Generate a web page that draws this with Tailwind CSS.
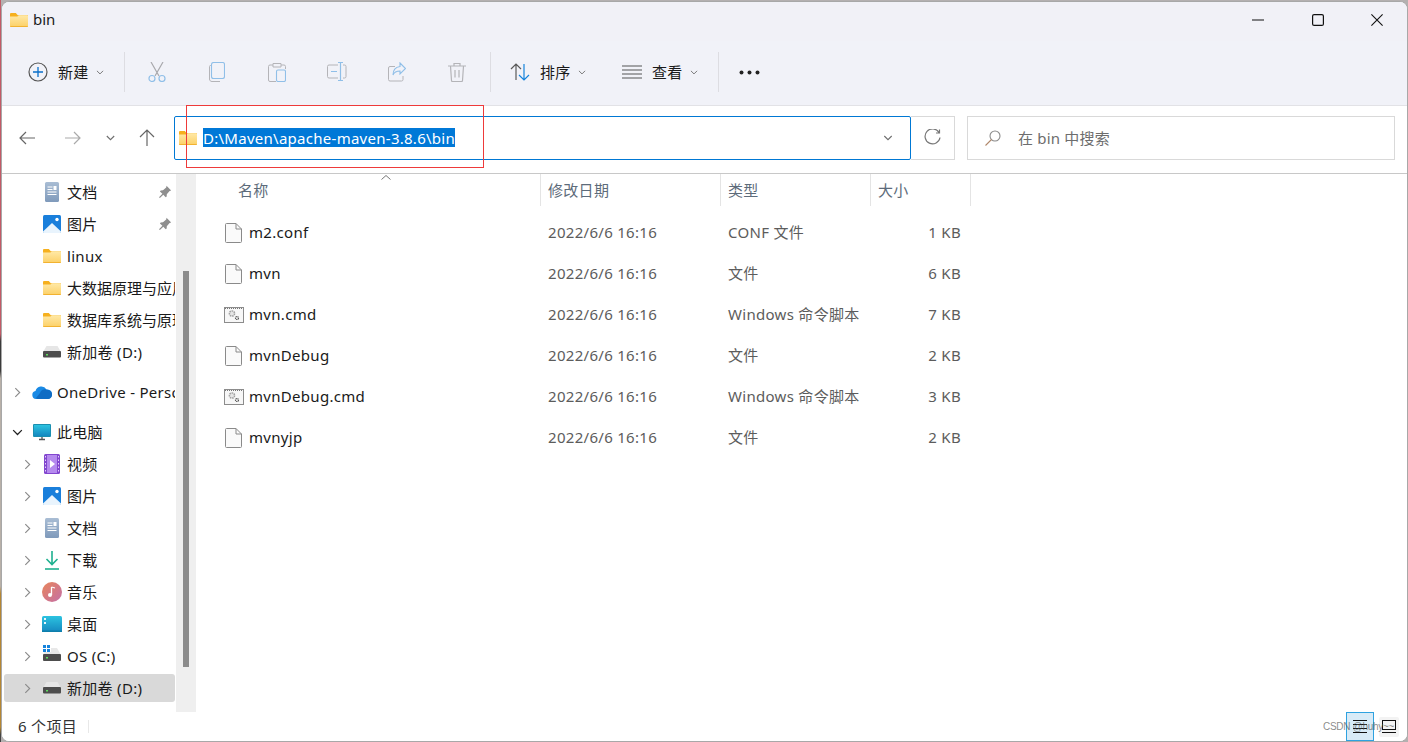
<!DOCTYPE html>
<html lang="zh-CN">
<head>
<meta charset="utf-8">
<title>bin</title>
<script src="https://cdn.jsdelivr.net/npm/@tailwindcss/browser@4"></script>
</head>
<body class="m-0 overflow-hidden bg-[#b4b0b0]">
<svg width="0" height="0" class="absolute">
  <defs>
    <linearGradient id="fg" x1="0" y1="0" x2="0" y2="1"><stop offset="0" stop-color="#ffe9a8"/><stop offset="1" stop-color="#fcd066"/></linearGradient>
    <linearGradient id="mus" x1="0" y1="0" x2="1" y2="1"><stop offset="0" stop-color="#e8855a"/><stop offset="1" stop-color="#c46fa8"/></linearGradient>
    <linearGradient id="desk" x1="0" y1="0" x2="0" y2="1"><stop offset="0" stop-color="#2cc3e0"/><stop offset="1" stop-color="#1588c0"/></linearGradient>
    <linearGradient id="docg" x1="0" y1="0" x2="0" y2="1"><stop offset="0" stop-color="#a9bdd4"/><stop offset="1" stop-color="#7f9abb"/></linearGradient>
    <symbol id="folder" viewBox="0 0 18 14"><path d="M0 1.200C0 .5.5 0 1.200 0h4.600l2 2.200H18V5H0z" fill="#f6b01e"/><path d="M0 3.400h7.400l1.600-1.200h8c.6 0 1 .4 1 1V13c0 .6-.4 1-1 1H1c-.6 0-1-.4-1-1z" fill="url(#fg)"/><path d="M0 13.200h18V13c0 .6-.4 1-1 1H1c-.6 0-1-.4-1-.8z" fill="#eea81e"/></symbol>
    <symbol id="file" viewBox="0 0 17 20"><path d="M.5 1.500a1 1 0 0 1 1-1H11L16.500 6v12.500a1 1 0 0 1-1 1h-14a1 1 0 0 1-1-1z" fill="#fafafa" stroke="#8a8a8a"/><path d="M11 .5V6h5.500" fill="none" stroke="#8a8a8a"/></symbol>
    <symbol id="cmd" viewBox="0 0 20 16"><rect x=".5" y=".5" width="19" height="15" fill="#f7f7f7" stroke="#8c8c8c"/><path d="M1 1.500h18" stroke="#777" stroke-dasharray="1 1"/><circle cx="8" cy="6.500" r="2.600" fill="#e6e6e6" stroke="#a0a0a0" stroke-width="1.500" stroke-dasharray="1.600 .7"/><circle cx="13" cy="11" r="1.500" fill="#fff" stroke="#555" stroke-width="1.200" stroke-dasharray="1.200 .5"/></symbol>
    <symbol id="chev-r" viewBox="0 0 8 12"><path d="M1.500 1l5 5-5 5" fill="none" stroke="#8a8a8a" stroke-width="1.300"/></symbol>
    <symbol id="chev-d" viewBox="0 0 9 6"><path d="M.8 1l3.700 3.700L8.200 1" fill="none" stroke="#6e6e6e" stroke-width="1.100"/></symbol>
    <symbol id="doc" viewBox="0 0 16 20"><rect width="14" height="20" x="1" rx="1.500" fill="url(#docg)"/><path d="M3.500 5h5M3.500 7.500h5M3.500 10h9M3.500 12.500h9" stroke="#fff" stroke-width="1"/><rect x="9.500" y="4" width="3" height="4" fill="#fff"/></symbol>
    <symbol id="pic" viewBox="0 0 18 18"><rect width="18" height="18" rx="1.500" fill="#1a7fdb"/><path d="M0 16.500L9 8l9 8.500V17a1 1 0 0 1-1 1H1a1 1 0 0 1-1-1z" fill="#e9f4fd"/><circle cx="14" cy="4.500" r="1.700" fill="#fff"/></symbol>
    <symbol id="pin" viewBox="0 0 14 14"><path d="M8.500 0.800l4.700 4.700-1.600.4-2.800 3.300-.1 2.300-1 .8-2.400-2.600-3.400 3.400-.9-.9 3.400-3.400-2.500-2.400.8-1 2.300-.1 3.200-2.800z" fill="#8f8f8f"/></symbol>
    <symbol id="drive" viewBox="0 0 18 12"><path d="M3.500 0h11L18 6H0z" fill="#e6e6e6"/><rect y="5" width="18" height="6.500" rx="1" fill="#4d4d4d"/><rect x="3" y="8" width="2" height="1.500" fill="#5fdc5f"/></symbol>
  </defs>
</svg>

<div class="w-[1408px] h-[742px] relative overflow-hidden bg-[#b4b0b0]" style="font-family:'Noto Sans','Noto Sans CJK SC',sans-serif">
  <div class="w-[1407px] h-[741px] mt-px ml-px flex flex-col bg-white rounded-[8px] border border-[#a8a8a8] overflow-hidden text-[15px] tracking-[0.3px] text-[#1a1a1a]">

    <!-- Title bar -->
    <div class="h-[39px] shrink-0 flex items-center bg-[#f1f1f7] pb-[4px]">
      <svg class="w-[18px] h-[14px] ml-[8px]"><use href="#folder"/></svg>
      <span class="ml-[5px] tracking-normal">bin</span>
      <div class="ml-auto flex items-center pr-[24px] gap-[47px]">
        <svg class="w-[12px] h-[12px] mr-px" viewBox="0 0 12 12"><path d="M0 6h12" stroke="#111" stroke-width="1.200"/></svg>
        <svg class="w-[12px] h-[12px]" viewBox="0 0 12 12"><rect x=".6" y=".6" width="10.800" height="10.800" rx="1.500" fill="none" stroke="#111" stroke-width="1.200"/></svg>
        <svg class="w-[12px] h-[12px]" viewBox="0 0 12 12"><path d="M.4.400l11.200 11.200M11.600.400L.4 11.600" stroke="#111" stroke-width="1.100"/></svg>
      </div>
    </div>

    <!-- Toolbar -->
    <div class="h-[65px] shrink-0 flex items-center bg-[#f1f2f8] border-b border-[#e2e2e6] pl-[26px] pb-[2px]">
      <svg class="w-[20px] h-[20px]" viewBox="0 0 20 20"><circle cx="10" cy="10" r="9" fill="none" stroke="#555" stroke-width="1.200"/><path d="M10 5v10M5 10h10" stroke="#0a6fc9" stroke-width="1.300"/></svg>
      <span class="ml-[10px] w-[30px] whitespace-nowrap">新建</span>
      <svg class="ml-[8px] w-[8px] h-[5px]"><use href="#chev-d"/></svg>
      <div class="ml-[20px] w-px h-[40px] bg-[#dddde2]"></div>
      <div class="flex items-center">
        <svg class="ml-[23px] w-[18px] h-[20px]" viewBox="0 0 18 20"><path d="M3 0l8 14M15 0L7 14" stroke="#a9a9ad" stroke-width="1.200"/><circle cx="4" cy="16.500" r="3" fill="none" stroke="#90bfe8" stroke-width="1.200"/><circle cx="14" cy="16.500" r="3" fill="none" stroke="#90bfe8" stroke-width="1.200"/></svg>
        <svg class="ml-[43px] w-[16px] h-[20px]" viewBox="0 0 16 20"><path d="M2.500 3.500h-1a1 1 0 0 0-1 1V17c0 1.500 1 2.500 2.500 2.500h8" fill="none" stroke="#b4b4b8"/><rect x="2.500" y=".5" width="13" height="16" rx="2" fill="none" stroke="#90bfe8" stroke-width="1.100"/></svg>
        <svg class="ml-[43px] w-[18px] h-[20px]" viewBox="0 0 18 20"><path d="M5 3H2a1.500 1.500 0 0 0-1.500 1.500V18A1.500 1.500 0 0 0 2 19.500h6M13 3h3a1.500 1.500 0 0 1 1.500 1.500V7M5 1.500h8V5H5z" fill="none" stroke="#b4b4b8"/><rect x="8.500" y="8" width="9" height="11.500" rx="1.500" fill="#f1f2f8" stroke="#90bfe8" stroke-width="1.100"/></svg>
        <svg class="ml-[41px] w-[20px] h-[20px]" viewBox="0 0 20 20"><path d="M11 3H2a1.500 1.500 0 0 0-1.500 1.500v10A1.500 1.500 0 0 0 2 16h9M16 3h1.500A1.500 1.500 0 0 1 19 4.500v10a1.500 1.500 0 0 1-1.500 1.500H16" fill="none" stroke="#b4b4b8"/><path d="M11 .5h5M13.500.5v18M11 18.500h5M4 9.500h6" fill="none" stroke="#90bfe8" stroke-width="1.200"/></svg>
        <svg class="ml-[41px] w-[18px] h-[20px]" viewBox="0 0 18 20"><path d="M7 4.500H2A1.500 1.500 0 0 0 .5 6v11.500A1.500 1.500 0 0 0 2 19h11.500a1.500 1.500 0 0 0 1.500-1.500V14" fill="none" stroke="#b4b4b8"/><path d="M12 1l5.500 5.500L12 12V9c-4 0-6 1.500-7 4 0-5 3-8 7-8.500z" fill="none" stroke="#90bfe8" stroke-width="1.100"/></svg>
        <svg class="ml-[42px] w-[18px] h-[20px]" viewBox="0 0 18 20"><path d="M0 4h18M6 4V1.500h6V4M2.500 4l1 14.500a1 1 0 0 0 1 1h9a1 1 0 0 0 1-1l1-14.500M7 8v7.500M11 8v7.500" fill="none" stroke="#b4b4b8" stroke-width="1.200"/></svg>
      </div>
      <div class="ml-[24px] w-px h-[40px] bg-[#dddde2]"></div>
      <svg class="ml-[19px] w-[20px] h-[18px]" viewBox="0 0 20 18"><path d="M6 17V1M1 6l5-5 5 5" fill="none" stroke="#5a5a5a" stroke-width="1.200"/><path d="M14 1v16M9 12l5 5 5-5" fill="none" stroke="#1583dc" stroke-width="1.200"/></svg>
      <span class="ml-[10px] w-[30px] whitespace-nowrap">排序</span>
      <svg class="ml-[8px] w-[8px] h-[5px]"><use href="#chev-d"/></svg>
      <svg class="ml-[36px] w-[20px] h-[14px]" viewBox="0 0 20 14"><path d="M0 1h20M0 5h20M0 9h20M0 13h20" stroke="#555" stroke-width="1.100"/></svg>
      <span class="ml-[10px] w-[30px] whitespace-nowrap">查看</span>
      <svg class="ml-[8px] w-[8px] h-[5px]"><use href="#chev-d"/></svg>
      <div class="ml-[20px] w-px h-[40px] bg-[#dddde2]"></div>
      <svg class="ml-[20px] w-[21px] h-[5px]" viewBox="0 0 21 5"><circle cx="2.500" cy="2.500" r="2" fill="#222"/><circle cx="10.500" cy="2.500" r="2" fill="#222"/><circle cx="18.500" cy="2.500" r="2" fill="#222"/></svg>
    </div>

    <!-- Address bar -->
    <div class="h-[68px] shrink-0 flex items-center border-b border-[#c8c8c8] bg-white pl-[17px] pb-[4px]">
      <svg class="w-[16px] h-[14px]" viewBox="0 0 16 14"><path d="M16 7H1M7 1L1 7l6 6" fill="none" stroke="#666" stroke-width="1.200"/></svg>
      <svg class="ml-[30px] w-[16px] h-[14px]" viewBox="0 0 16 14"><path d="M0 7h15M9 1l6 6-6 6" fill="none" stroke="#aaa" stroke-width="1.200"/></svg>
      <svg class="ml-[25px] w-[9px] h-[6px]"><use href="#chev-d"/></svg>
      <svg class="ml-[24px] w-[16px] h-[17px]" viewBox="0 0 16 17"><path d="M8 17V1M1 8l7-7 7 7" fill="none" stroke="#666" stroke-width="1.200"/></svg>
      <div class="ml-[19px] w-[737px] h-[44px] flex items-center border border-[#0078d4] rounded-[2px] pl-[4px]">
        <svg class="w-[18px] h-[14px]"><use href="#folder"/></svg>
        <span class="ml-[6px] bg-[#0078d7] text-white h-[19px] leading-[20px] tracking-[0.27px] whitespace-nowrap">D:\Maven\apache-maven-3.8.6\bin</span>
        <svg class="ml-auto mr-[17px] w-[10px] h-[6px]"><use href="#chev-d"/></svg>
      </div>
      <div class="w-[44px] h-[44px] flex items-center justify-center border border-l-0 border-[#d9d9d9]">
        <svg class="w-[17px] h-[17px]" viewBox="0 0 17 17"><path d="M15 3.500A7.500 7.500 0 1 0 16 8.500M15.500 .5v3.500H12" fill="none" stroke="#777" stroke-width="1.200"/></svg>
      </div>
      <div class="ml-[12px] w-[428px] h-[44px] flex items-center border border-[#d9d9d9] pl-[17px]">
        <svg class="w-[16px] h-[16px]" viewBox="0 0 16 16"><circle cx="10" cy="6" r="5" fill="none" stroke="#8a8a8a" stroke-width="1.100"/><path d="M6.500 9.500L.5 15.500" stroke="#b0876a" stroke-width="1.100"/></svg>
        <span class="ml-[17px] pt-[2px] tracking-[0.2px] text-[#6d6d6d] whitespace-nowrap">在 bin 中搜索</span>
      </div>
    </div>

    <!-- Main -->
    <div class="flex-1 min-h-0 flex">
      <!-- Sidebar -->
      <div class="w-[173px] shrink-0 overflow-hidden pt-[4px] flex flex-col gap-[4px]">
        <div class="h-[28px] flex items-center whitespace-nowrap pl-[41px] relative"><svg class="shrink-0 w-[18px] h-[20px]"><use href="#doc"/></svg><span class="ml-[6px]">文档</span><svg class="absolute left-[156px] w-[14px] h-[14px]"><use href="#pin"/></svg></div>
        <div class="h-[28px] flex items-center whitespace-nowrap pl-[41px] relative"><svg class="shrink-0 w-[18px] h-[18px]"><use href="#pic"/></svg><span class="ml-[6px]">图片</span><svg class="absolute left-[156px] w-[14px] h-[14px]"><use href="#pin"/></svg></div>
        <div class="h-[28px] flex items-center whitespace-nowrap pl-[41px]"><svg class="shrink-0 w-[18px] h-[14px]"><use href="#folder"/></svg><span class="ml-[6px]">linux</span></div>
        <div class="h-[28px] flex items-center whitespace-nowrap pl-[41px]"><svg class="shrink-0 w-[18px] h-[14px]"><use href="#folder"/></svg><span class="ml-[6px] tracking-normal">大数据原理与应用</span></div>
        <div class="h-[28px] flex items-center whitespace-nowrap pl-[41px]"><svg class="shrink-0 w-[18px] h-[14px]"><use href="#folder"/></svg><span class="ml-[6px] tracking-normal">数据库系统与原理</span></div>
        <div class="h-[28px] flex items-center whitespace-nowrap pl-[41px]"><svg class="shrink-0 w-[18px] h-[12px]"><use href="#drive"/></svg><span class="ml-[6px]">新加卷 (D:)</span></div>

        <div class="h-[28px] mt-[8px] flex items-center whitespace-nowrap pl-[12px]"><svg class="shrink-0 w-[7px] h-[11px]"><use href="#chev-r"/></svg>
          <svg class="shrink-0 ml-[11px] w-[20px] h-[13px]" viewBox="0 0 20 13"><path d="M4 13a4 4 0 0 1-.5-7.900A6 6 0 0 1 14.500 3.500 4.800 4.800 0 0 1 16 13z" fill="#1a8ae5"/><path d="M8 7a5 5 0 0 1 7-3.300A4.800 4.800 0 0 1 20 9c0 2-1.500 4-4 4H6a4 4 0 0 1-2-1z" fill="#0f6cc4"/></svg><span class="ml-[5px]">OneDrive - Personal</span></div>

        <div class="h-[28px] mt-[8px] flex items-center whitespace-nowrap pl-[10px]"><svg class="shrink-0 w-[11px] h-[7px]" viewBox="0 0 9 6"><path d="M.8 1l3.700 3.700L8.200 1" fill="none" stroke="#222" stroke-width="1.100"/></svg>
          <svg class="shrink-0 ml-[10px] w-[18px] h-[17px]" viewBox="0 0 18 17"><rect width="18" height="13" rx="1" fill="#1a8fb0"/><rect x="1" y="1" width="16" height="11" fill="url(#desk)"/><path d="M6 15.500h6M9 13v2.500" stroke="#555" stroke-width="1.300"/></svg><span class="ml-[6px]">此电脑</span></div>

        <div class="h-[28px] flex items-center whitespace-nowrap pl-[22px]"><svg class="shrink-0 w-[7px] h-[11px]"><use href="#chev-r"/></svg>
          <svg class="shrink-0 ml-[13px] w-[16px] h-[20px]" viewBox="0 0 16 20"><rect width="16" height="20" rx="1.500" fill="#8246cf"/><rect x="3" y="1" width="10" height="18" fill="#b58aee"/><path d="M6 6l5 4-5 4z" fill="#fff"/><path d="M1.500 2v16M14.500 2v16" stroke="#e2d2f7" stroke-dasharray="1.500 2"/></svg><span class="ml-[7px]">视频</span></div>
        <div class="h-[28px] flex items-center whitespace-nowrap pl-[22px]"><svg class="shrink-0 w-[7px] h-[11px]"><use href="#chev-r"/></svg>
          <svg class="shrink-0 ml-[12px] w-[18px] h-[18px]"><use href="#pic"/></svg><span class="ml-[6px]">图片</span></div>
        <div class="h-[28px] flex items-center whitespace-nowrap pl-[22px]"><svg class="shrink-0 w-[7px] h-[11px]"><use href="#chev-r"/></svg>
          <svg class="shrink-0 ml-[13px] w-[16px] h-[20px]"><use href="#doc"/></svg><span class="ml-[7px]">文档</span></div>
        <div class="h-[28px] flex items-center whitespace-nowrap pl-[22px]"><svg class="shrink-0 w-[7px] h-[11px]"><use href="#chev-r"/></svg>
          <svg class="shrink-0 ml-[14px] w-[14px] h-[19px]" viewBox="0 0 14 19"><path d="M7 0v13M1.500 8L7 13.500 12.500 8" fill="none" stroke="#1fb08f" stroke-width="1.600"/><path d="M0 18h14" stroke="#1fb08f" stroke-width="1.600"/></svg><span class="ml-[8px]">下载</span></div>
        <div class="h-[28px] flex items-center whitespace-nowrap pl-[22px]"><svg class="shrink-0 w-[7px] h-[11px]"><use href="#chev-r"/></svg>
          <svg class="shrink-0 ml-[11px] w-[20px] h-[20px]" viewBox="0 0 20 20"><circle cx="10" cy="10" r="10" fill="url(#mus)"/><path d="M9.500 5v8M9.500 5l3.500 1" fill="none" stroke="#fff" stroke-width="1.300"/><circle cx="8" cy="13" r="2" fill="#fff"/></svg><span class="ml-[5px]">音乐</span></div>
        <div class="h-[28px] flex items-center whitespace-nowrap pl-[22px]"><svg class="shrink-0 w-[7px] h-[11px]"><use href="#chev-r"/></svg>
          <svg class="shrink-0 ml-[11px] w-[20px] h-[16px]" viewBox="0 0 20 16"><rect width="20" height="16" rx="1.500" fill="url(#desk)"/><rect x="2" y="2" width="2" height="2" fill="#e8f7fc"/><rect x="2" y="6" width="2" height="2" fill="#e8f7fc"/><rect y="14.500" width="20" height="1.500" fill="#0d7eab"/></svg><span class="ml-[5px]">桌面</span></div>
        <div class="h-[28px] flex items-center whitespace-nowrap pl-[22px]"><svg class="shrink-0 w-[7px] h-[11px]"><use href="#chev-r"/></svg>
          <svg class="shrink-0 ml-[12px] w-[18px] h-[20px] -mt-[2px]" viewBox="0 0 18 20"><path d="M0 0h3v3H0zM4 0h3v3H4zM0 4h3v3H0zM4 4h3v3H4z" fill="#1583dc"/><path d="M8 3h6l4 7H0l1-3h7z" fill="#e8e8e8"/><rect y="9" width="18" height="7" rx="1" fill="#4d4d4d"/><rect x="3" y="12" width="2" height="1.500" fill="#5fdc5f"/></svg><span class="ml-[6px]">OS (C:)</span></div>
        <div class="h-[28px] flex items-center whitespace-nowrap pl-[20px] ml-[2px] bg-[#d9d9d9] rounded-[3px]"><svg class="shrink-0 w-[7px] h-[11px]"><use href="#chev-r"/></svg>
          <svg class="shrink-0 ml-[12px] w-[18px] h-[12px]"><use href="#drive"/></svg><span class="ml-[6px]">新加卷 (D:)</span></div>
      </div>

      <!-- Scrollbar -->
      <div class="w-[20px] ml-px h-[538px] shrink-0 bg-[#efefef] pt-[97px] flex justify-center">
        <div class="w-[6px] h-[396px] bg-[#8c8c8c]"></div>
      </div>

      <!-- File list -->
      <div class="flex-1 min-w-0">
        <div class="relative h-[32px] w-[775px] grid grid-cols-[345px_180px_150px_100px] text-[#5d6b7a]">
          <div class="pl-[42px] flex items-center border-r border-[#e4e4e4]">名称</div>
          <div class="pl-[7px] flex items-center border-r border-[#e4e4e4]">修改日期</div>
          <div class="pl-[7px] flex items-center border-r border-[#e4e4e4]">类型</div>
          <div class="pl-[7px] flex items-center border-r border-[#e4e4e4]">大小</div>
          <svg class="absolute left-[185px] top-[1px] w-[10px] h-[5px]" viewBox="0 0 10 5"><path d="M.5 4.500L5 .5l4.500 4" fill="none" stroke="#777"/></svg>
        </div>
        <div class="mt-[6px] w-[775px] text-[#5c5c5c]">
          <div class="h-[41px] grid grid-cols-[345px_180px_150px_100px] items-center"><div class="pl-[29px] flex items-center text-[#1a1a1a]"><svg class="w-[17px] h-[20px]"><use href="#file"/></svg><span class="ml-[7px]">m2.conf</span></div><div class="pl-[7px]">2022/6/6 16:16</div><div class="pl-[7px]">CONF 文件</div><div class="text-right pr-[10px]">1 KB</div></div>
          <div class="h-[41px] grid grid-cols-[345px_180px_150px_100px] items-center"><div class="pl-[29px] flex items-center text-[#1a1a1a]"><svg class="w-[17px] h-[20px]"><use href="#file"/></svg><span class="ml-[7px]">mvn</span></div><div class="pl-[7px]">2022/6/6 16:16</div><div class="pl-[7px]">文件</div><div class="text-right pr-[10px]">6 KB</div></div>
          <div class="h-[41px] grid grid-cols-[345px_180px_150px_100px] items-center"><div class="pl-[28px] flex items-center text-[#1a1a1a]"><svg class="w-[20px] h-[16px]"><use href="#cmd"/></svg><span class="ml-[5px]">mvn.cmd</span></div><div class="pl-[7px]">2022/6/6 16:16</div><div class="pl-[7px]">Windows 命令脚本</div><div class="text-right pr-[10px]">7 KB</div></div>
          <div class="h-[41px] grid grid-cols-[345px_180px_150px_100px] items-center"><div class="pl-[29px] flex items-center text-[#1a1a1a]"><svg class="w-[17px] h-[20px]"><use href="#file"/></svg><span class="ml-[7px]">mvnDebug</span></div><div class="pl-[7px]">2022/6/6 16:16</div><div class="pl-[7px]">文件</div><div class="text-right pr-[10px]">2 KB</div></div>
          <div class="h-[41px] grid grid-cols-[345px_180px_150px_100px] items-center"><div class="pl-[28px] flex items-center text-[#1a1a1a]"><svg class="w-[20px] h-[16px]"><use href="#cmd"/></svg><span class="ml-[5px]">mvnDebug.cmd</span></div><div class="pl-[7px]">2022/6/6 16:16</div><div class="pl-[7px]">Windows 命令脚本</div><div class="text-right pr-[10px]">3 KB</div></div>
          <div class="h-[41px] grid grid-cols-[345px_180px_150px_100px] items-center"><div class="pl-[29px] flex items-center text-[#1a1a1a]"><svg class="w-[17px] h-[20px]"><use href="#file"/></svg><span class="ml-[7px]">mvnyjp</span></div><div class="pl-[7px]">2022/6/6 16:16</div><div class="pl-[7px]">文件</div><div class="text-right pr-[10px]">2 KB</div></div>
        </div>
      </div>
    </div>

    <!-- Status bar -->
    <div class="h-[29px] shrink-0 flex items-center pl-[16px] bg-white">
      <span class="w-[70px] text-[#333]">6 个项目</span>
      <div class="w-px h-[13px] bg-[#e8e8e8]"></div>
      <div class="ml-auto mr-[8px] flex items-center">
        <div class="w-[28px] h-[29px] flex items-center justify-center border border-[#2ea2e0] bg-[#d8ebf7]">
          <svg class="w-[14px] h-[13px]" viewBox="0 0 14 13"><path d="M0 .5h14M0 4.500h14M0 8.500h14M0 12.500h14" stroke="#111" stroke-width="1.100"/></svg>
        </div>
        <div class="ml-[5px] w-[20px] h-[20px] flex items-center justify-center bg-[#f3f3f3] rounded-[2px]">
          <svg class="w-[14px] h-[13px]" viewBox="0 0 14 13"><rect x=".5" y=".5" width="13" height="9" fill="none" stroke="#111"/><path d="M0 12.500h14" stroke="#111"/></svg>
        </div>
      </div>
    </div>
  </div>

  <!-- Desktop sliver, annotation and watermark over the screenshot -->
  <div class="absolute left-0 top-0 w-px h-full bg-[linear-gradient(180deg,#c25a66_0%,#c25a66_45%,#3a3a3a_46%,#3a3a3a_50%,#b8b0a8_51%,#b8b0a8_79%,#b58632_80%,#b58632_98%,#444_99%)]"></div>
  <div class="absolute left-[186px] top-[105px] w-[298px] h-[63px] border border-[#ee3a3a] pointer-events-none"></div>
  <span class="absolute left-[1323px] top-[719px] text-[10px] tracking-[-0.3px] leading-[16px] text-[#555]/70 whitespace-nowrap" style="font-family:'Liberation Sans',sans-serif">CSDN @huhy~~</span>
</div>
</body>
</html>
